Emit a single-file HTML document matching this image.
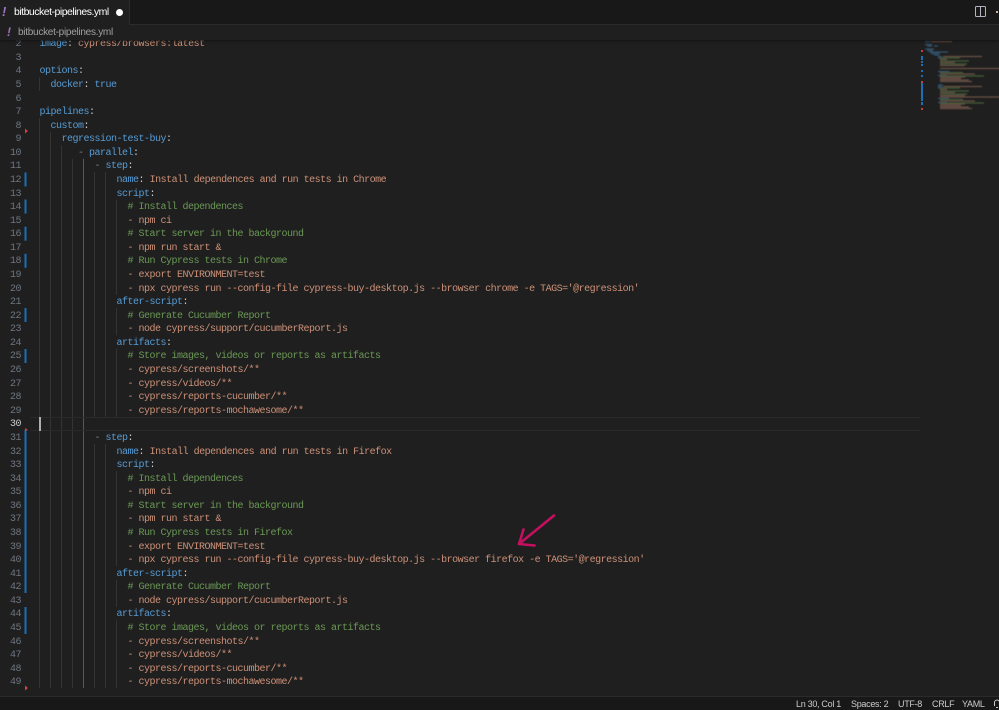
<!DOCTYPE html>
<html><head><meta charset="utf-8"><title>bitbucket-pipelines.yml</title>
<style>
html,body{margin:0;padding:0;background:#1f1f1f;width:999px;height:710px;overflow:hidden}
body{position:relative;font-family:"Liberation Sans",sans-serif}
.a{position:absolute}
pre{margin:0;position:absolute;font:10px/13.575px "Liberation Mono",monospace;letter-spacing:-.5px;white-space:pre}
#code{left:39.5px;top:38.2px;color:#569cd6}
#nums{left:0;width:21px;top:38.2px;text-align:right;color:#6e7681}
i{font-style:normal}
.v{color:#ce9178}.c{color:#6a9955}.p{color:#cccccc}.d{color:#808080}
.s{position:absolute;top:698px;font-size:9px;letter-spacing:-.3px;line-height:12px;color:#cccccc;white-space:nowrap}
</style></head><body>
<svg class="a" style="left:0;top:0" width="999" height="710">
<defs><filter id="b" x="-5%" y="-5%" width="110%" height="110%"><feGaussianBlur stdDeviation=".45"/></filter></defs>
<g stroke="#343434" stroke-width="1" fill="none">
<path d="M39.5 77.4V91M39.5 118.2V688M50.5 131.7V688M61.5 145.3V688M72.5 158.9V688M94.5 172.4V416.6M105.5 172.4V416.6M94.5 444V688M105.5 444V688M116.5 199.6V294.6M116.5 308.1V335.3M116.5 348.9V416.6M116.5 471.1V566.2M116.5 579.8V606.9M116.5 620.5V688"/>
<path stroke="#585858" d="M83.5 158.9V688"/>
<path stroke="#2a2a2a" d="M30 417.5H920M30 430.5H920"/>
</g>
<rect x="39" y="417" width="2" height="14" fill="#aeafad"/>
<g fill="#1a6fb8">
<rect x="24.5" y="172.5" width="2" height="14"/><rect x="24.5" y="199.5" width="2" height="14"/><rect x="24.5" y="226.7" width="2" height="14"/><rect x="24.5" y="253.8" width="2" height="14"/><rect x="24.5" y="308" width="2" height="14"/><rect x="24.5" y="349" width="2" height="14"/>
<rect x="24.5" y="430" width="2" height="163"/><rect x="24.5" y="607" width="2" height="27"/>
</g>
<g fill="#d8403f">
<path d="M25 128.5l3 2.5-3 2.5zM25 428l3 2-3 1zM25 685.5l3 2.5-3 2.5z"/>
</g>
<!-- minimap -->
<g fill="none" stroke-width="1.3" opacity=".8" filter="url(#b)">
<path stroke="#3b6485" d="M925 41.500h5M925 44.500h7M927 46h5M934 46h4M925 49h9M927 50.500h6M929 52h19M931 53.500h9M934 55h5M938 56.500h4M938 58h6M938 85h5M938 86.500h4M938 88h6M938 71.500h11M938 75.500h9M938 98.500h11M938 102.500h9"/>
<path stroke="#7c5f50" d="M931 41.500h21M943 56.500h39M940 59.500h7M940 62.500h15M940 65.500h25M940 68.500h84M940 74h35M940 77h25M940 78.500h21M940 80h29M940 81.500h32M943 86.500h39M940 89.500h7M940 92.500h15M940 95.500h25M940 97h84M940 101h35M940 104h25M940 105.500h21M940 107h29M940 108.500h32"/>
<path stroke="#4d6b41" d="M940 58h20M940 61h29M940 64h27M940 72.500h23M940 76h44M940 88h20M940 91h29M940 94h27M940 99.500h23M940 103h44"/>
</g>
<g fill="#1a6fb8"><rect x="921" y="56" width="2" height="2"/><rect x="921" y="58" width="2" height="2"/><rect x="921" y="61" width="2" height="2"/><rect x="921" y="64" width="2" height="2"/><rect x="921" y="70" width="2" height="2"/><rect x="921" y="75" width="2" height="2"/><rect x="921" y="83" width="2" height="18"/><rect x="921" y="102" width="2" height="3"/></g>
<g fill="#c04040"><rect x="921" y="50" width="2" height="2"/><rect x="921" y="81" width="2" height="2"/><rect x="921" y="108" width="2" height="2"/></g>
<!-- arrow -->
<g stroke="#c4105f" stroke-width="2.6" fill="none" stroke-linecap="round" stroke-linejoin="round">
<path d="M554 515.500L519 544M523.500 529.500L519 544L534.500 545.500"/>
</g>
</svg>
<pre id="nums">2
3
4
5
6
7
8
9
10
11
12
13
14
15
16
17
18
19
20
21
22
23
24
25
26
27
28
29
<i style="color:#cccccc">30</i>
31
32
33
34
35
36
37
38
39
40
41
42
43
44
45
46
47
48
49</pre>
<pre id="code">image<i class="p">:</i> <i class="v">cypress/browsers:latest</i>

options<i class="p">:</i>
  docker<i class="p">:</i> true

pipelines<i class="p">:</i>
  custom<i class="p">:</i>
    regression-test-buy<i class="p">:</i>
       <i class="d">-</i> parallel<i class="p">:</i>
          <i class="d">-</i> step<i class="p">:</i>
              name<i class="p">:</i> <i class="v">Install dependences and run tests in Chrome</i>
              script<i class="p">:</i>
                <i class="c"># Install dependences</i>
                <i class="v">- npm ci</i>
                <i class="c"># Start server in the background</i>
                <i class="v">- npm run start &amp;</i>
                <i class="c"># Run Cypress tests in Chrome</i>
                <i class="v">- export ENVIRONMENT=test</i>
                <i class="v">- npx cypress run --config-file cypress-buy-desktop.js --browser chrome -e TAGS='@regression'</i>
              after-script<i class="p">:</i>
                <i class="c"># Generate Cucumber Report</i>
                <i class="v">- node cypress/support/cucumberReport.js</i>
              artifacts<i class="p">:</i>
                <i class="c"># Store images, videos or reports as artifacts</i>
                <i class="v">- cypress/screenshots/**</i>
                <i class="v">- cypress/videos/**</i>
                <i class="v">- cypress/reports-cucumber/**</i>
                <i class="v">- cypress/reports-mochawesome/**</i>

          <i class="d">-</i> step<i class="p">:</i>
              name<i class="p">:</i> <i class="v">Install dependences and run tests in Firefox</i>
              script<i class="p">:</i>
                <i class="c"># Install dependences</i>
                <i class="v">- npm ci</i>
                <i class="c"># Start server in the background</i>
                <i class="v">- npm run start &amp;</i>
                <i class="c"># Run Cypress tests in Firefox</i>
                <i class="v">- export ENVIRONMENT=test</i>
                <i class="v">- npx cypress run --config-file cypress-buy-desktop.js --browser firefox -e TAGS='@regression'</i>
              after-script<i class="p">:</i>
                <i class="c"># Generate Cucumber Report</i>
                <i class="v">- node cypress/support/cucumberReport.js</i>
              artifacts<i class="p">:</i>
                <i class="c"># Store images, videos or reports as artifacts</i>
                <i class="v">- cypress/screenshots/**</i>
                <i class="v">- cypress/videos/**</i>
                <i class="v">- cypress/reports-cucumber/**</i>
                <i class="v">- cypress/reports-mochawesome/**</i></pre>
<!-- breadcrumb -->
<div class="a" style="left:0;top:25px;width:999px;height:15px;background:#1f1f1f;box-shadow:0 1px 2px #141414"></div>
<div class="a" style="left:7px;top:26px;font:italic bold 12px/13px 'Liberation Sans',sans-serif;color:#a074c4">!</div>
<div class="a" style="left:18px;top:25px;font-size:10px;letter-spacing:-.27px;line-height:15px;color:#a0a0a0;white-space:nowrap">bitbucket-pipelines.yml</div>
<!-- tabs -->
<div class="a" style="left:0;top:0;width:999px;height:24px;background:#181818;border-bottom:1px solid #2b2b2b"></div>
<div class="a" style="left:0;top:0;width:129px;height:25px;background:#1f1f1f;border-right:1px solid #2b2b2b"></div>
<div class="a" style="left:2px;top:5px;font:italic bold 13px/14px 'Liberation Sans',sans-serif;color:#a074c4">!</div>
<div class="a" style="left:14px;top:5px;font-size:10.5px;letter-spacing:-.5px;line-height:14px;color:#ffffff;white-space:nowrap">bitbucket-pipelines.yml</div>
<div class="a" style="left:116px;top:9px;width:7px;height:7px;border-radius:50%;background:#fff"></div>
<svg class="a" style="left:975px;top:6px" width="12" height="12"><rect x=".5" y=".5" width="10" height="10" rx="1" fill="none" stroke="#b4b4c0"/><path d="M5.500 1V10" stroke="#b4b4c0"/></svg>
<div class="a" style="left:996px;top:11px;width:2px;height:2px;background:#d0b0a0"></div>
<!-- status bar -->
<div class="a" style="left:0;top:696px;width:999px;height:14px;background:#181818;border-top:1px solid #2b2b2b;box-sizing:border-box"></div>
<div class="s" style="left:796px">Ln 30, Col 1</div>
<div class="s" style="left:851px">Spaces: 2</div>
<div class="s" style="left:898px">UTF-8</div>
<div class="s" style="left:932px">CRLF</div>
<div class="s" style="left:962px">YAML</div>
<svg class="a" style="left:994px;top:699px" width="5" height="9"><path d="M2 8.500h2M.5 7V3.500a2.500 2.500 0 0 1 5 0V7" fill="none" stroke="#cccccc"/></svg>
</body></html>
